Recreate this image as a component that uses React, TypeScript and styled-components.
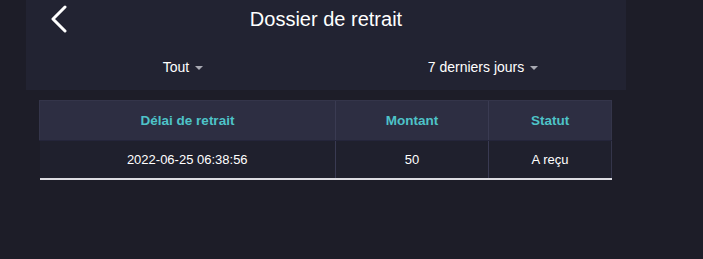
import React from 'react';
import styled, { createGlobalStyle } from 'styled-components';

const GlobalStyle = createGlobalStyle`
	html, body {
		margin: 0;
		padding: 0;
		background: #1d1d28;
		font-family: 'Liberation Sans', Arial, sans-serif;
		color: #fff;
	}
`;

const Page = styled.div`
	width: 703px;
	height: 259px;
	padding-left: 26px;
	box-sizing: border-box;
`;

const HeaderPanel = styled.header`
	width: 600px;
	height: 90px;
	background: #222332;
	display: flex;
	flex-direction: column;
`;

const TitleBar = styled.div`
	position: relative;
	height: 38px;
	display: flex;
	align-items: center;
	justify-content: center;
`;

const BackButton = styled.button`
	position: absolute;
	left: 24px;
	top: 5px;
	width: 24px;
	height: 28px;
	padding: 0;
	border: none;
	background: none;
	cursor: pointer;
	display: flex;
	align-items: center;
`;

const Title = styled.h1`
	margin: 0;
	font-size: 20px;
	font-weight: 400;
	color: #fff;
`;

const FilterRow = styled.div`
	flex: 1;
	display: grid;
	grid-template-columns: 1fr 1fr;
	align-items: center;
	padding-top: 6px;
`;

const Filter = styled.div`
	display: flex;
	align-items: center;
	justify-content: center;
	font-size: 14px;
	color: #fff;
	cursor: pointer;
`;

const Caret = styled.span`
	width: 0;
	height: 0;
	margin-left: 6px;
	margin-right: -14px;
	border-left: 4px solid transparent;
	border-right: 4px solid transparent;
	border-top: 4px solid #a9aab3;
	margin-top: 1px;
`;

const Table = styled.table`
	margin: 10px 0 0 13px;
	width: 573px;
	border-collapse: collapse;
	table-layout: fixed;
`;

const HeadCell = styled.th<{ $w?: number }>`
	${(p) => (p.$w ? `width: ${p.$w}px;` : '')}
	height: 39px;
	padding: 0;
	background: #2d2e42;
	color: #4ec3c8;
	font-size: 13.5px;
	font-weight: 700;
	text-align: center;
	border-left: 1px solid #3a3b52;
	border-top: 1px solid #34354a;
	border-bottom: 1px solid #24253a;
	&:first-child {
		border-left: 1px solid #34354a;
	}
	&:last-child {
		border-right: 1px solid #34354a;
	}
`;

const Cell = styled.td`
	height: 37px;
	padding: 0;
	background: #1f202d;
	color: #fff;
	font-size: 13px;
	text-align: center;
	border-left: 1px solid #393a52;
	border-bottom: 2px solid #dcdce2;
	&:first-child {
		border-left: none;
	}
	&:last-child {
		border-right: 1px solid #34354a;
	}
`;

const records = [{ time: '2022-06-25 06:38:56', amount: 50, status: 'A reçu' }];

export default function App() {
	return (
		<>
			<GlobalStyle />
			<Page>
				<HeaderPanel>
					<TitleBar>
						<BackButton aria-label="retour">
							<svg width="20" height="28" viewBox="0 0 20 28">
								<path d="M15 2 L3 14 L15 26" fill="none" stroke="#fff" strokeWidth="3" strokeLinecap="round" strokeLinejoin="round" />
							</svg>
						</BackButton>
						<Title>Dossier de retrait</Title>
					</TitleBar>
					<FilterRow>
						<Filter>
							Tout
							<Caret />
						</Filter>
						<Filter>
							7 derniers jours
							<Caret />
						</Filter>
					</FilterRow>
				</HeaderPanel>
				<Table>
					<thead>
						<tr>
							<HeadCell $w={295}>Délai de retrait</HeadCell>
							<HeadCell $w={152}>Montant</HeadCell>
							<HeadCell>Statut</HeadCell>
						</tr>
					</thead>
					<tbody>
						{records.map((r) => (
							<tr key={r.time}>
								<Cell>{r.time}</Cell>
								<Cell>{r.amount}</Cell>
								<Cell>{r.status}</Cell>
							</tr>
						))}
					</tbody>
				</Table>
			</Page>
		</>
	);
}
